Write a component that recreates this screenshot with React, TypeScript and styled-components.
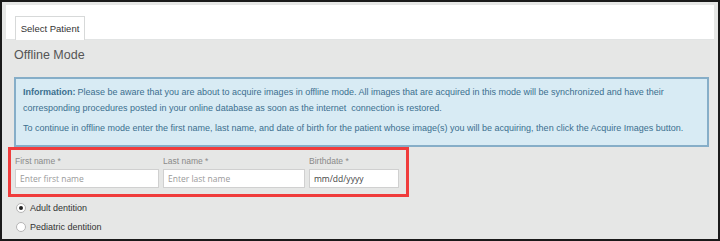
import React from "react";
import styled, { createGlobalStyle } from "styled-components";

const GlobalStyle = createGlobalStyle`
  html, body {
    margin: 0;
    padding: 0;
    background: #e6e7e6;
    font-family: "Liberation Sans", Arial, sans-serif;
  }
`

const Frame = styled.div`
  box-sizing: border-box;
  width: 720px;
  height: 241px;
  border: 2px solid #1a1a1a;
  background: #e6e7e6;
  padding: 3px 4px 0 4px;
  overflow: hidden;
`

const TabStrip = styled.div`
  background: #fff;
  height: 35px;
  padding: 6px 0 0 9px;
  box-sizing: border-box;
  border-bottom: 1px solid #e2e4e4;
  display: flex;
  align-items: flex-end;
`

const Tab = styled.div`
  box-sizing: border-box;
  height: 24px;
  width: 70px;
  border: 1px solid #d7d9d9;
  border-bottom: none;
  background: #fff;
  font-size: 9.5px;
  color: #333;
  display: flex;
  align-items: center;
  justify-content: center;
  margin-bottom: -1px;
`

const Content = styled.div`
  padding: 6px 9px 0 8px;
`

const Title = styled.h2`
  margin: 0;
  font-weight: normal;
  font-size: 12.5px;
  color: #555;
  line-height: 18px;
`

const InfoBox = styled.div`
  margin-top: 13px;
  box-sizing: border-box;
  width: 695px;
  height: 70px;
  background: #d8ebf4;
  border: 2px solid #86aec8;
  padding: 5px 7px;
  color: #3b6f8f;
  font-size: 9px;
  line-height: 16px;
`

const InfoLine = styled.p<{ $gap?: boolean }>`
  margin: ${(p) => (p.$gap ? "4px 0 0" : "0")};
`

const Strong = styled.b`
  margin-right: 2px;
`

const Highlight = styled.div`
  margin: 0 0 0 -6px;
  box-sizing: border-box;
  width: 401px;
  height: 50px;
  border: 3px solid #f03c3c;
  padding: 5px 0 0 4px;
  display: flex;
  gap: 4px;
`

const Field = styled.div<{ $w: number }>`
  width: ${(p) => p.$w}px;
  display: flex;
  flex-direction: column;
`

const Label = styled.label`
  font-size: 8.5px;
  color: #8a8a8a;
  line-height: 12px;
  height: 14px;
`

const Input = styled.div<{ $dark?: boolean }>`
  box-sizing: border-box;
  height: 19px;
  background: #fff;
  border: 1px solid #d0d0d0;
  font-size: 8.5px;
  color: ${(p) => (p.$dark ? "#444" : "#9a9a9a")};
  padding: 0 4px;
  display: flex;
  align-items: center;
  font-family: "Open Sans", "Liberation Sans", sans-serif;
`

const Radios = styled.div`
  padding: 4px 0 0 2px;
  display: flex;
  flex-direction: column;
  gap: 5px;
`

const RadioRow = styled.div`
  display: flex;
  align-items: center;
  gap: 4px;
  font-size: 9px;
  color: #333;
  height: 14px;
`

const Dot = styled.span<{ $on?: boolean }>`
  box-sizing: border-box;
  width: 10px;
  height: 10px;
  border-radius: 50%;
  border: 1px solid #b5b5b5;
  background: #fff;
  display: flex;
  align-items: center;
  justify-content: center;
  &::after {
    content: "";
    width: 4px;
    height: 4px;
    border-radius: 50%;
    background: ${(p) => (p.$on ? "#222" : "transparent")};
  }
`

const App: React.FunctionComponent = () => {
  return <Frame>
    <GlobalStyle />
    <TabStrip>
      <Tab>Select Patient</Tab>
    </TabStrip>
    <Content>
      <Title>Offline Mode</Title>
      <InfoBox>
        <InfoLine><Strong>Information:</Strong><span>Please be aware that you are about to acquire images in offline mode. All images that are acquired in this mode will be synchronized and have their corresponding procedures posted in your online database as soon as the internet&nbsp; connection is restored.</span></InfoLine>
        <InfoLine $gap>To continue in offline mode enter the first name, last name, and date of birth for the patient whose image(s) you will be acquiring, then click the Acquire Images button.</InfoLine>
      </InfoBox>
      <Highlight>
        <Field $w={144}>
          <Label>First name *</Label>
          <Input>Enter first name</Input>
        </Field>
        <Field $w={142}>
          <Label>Last name *</Label>
          <Input>Enter last name</Input>
        </Field>
        <Field $w={90}>
          <Label>Birthdate *</Label>
          <Input $dark>mm/dd/yyyy</Input>
        </Field>
      </Highlight>
      <Radios>
        <RadioRow><Dot $on />Adult dentition</RadioRow>
        <RadioRow><Dot />Pediatric dentition</RadioRow>
      </Radios>
    </Content>
  </Frame>
}

export default App
